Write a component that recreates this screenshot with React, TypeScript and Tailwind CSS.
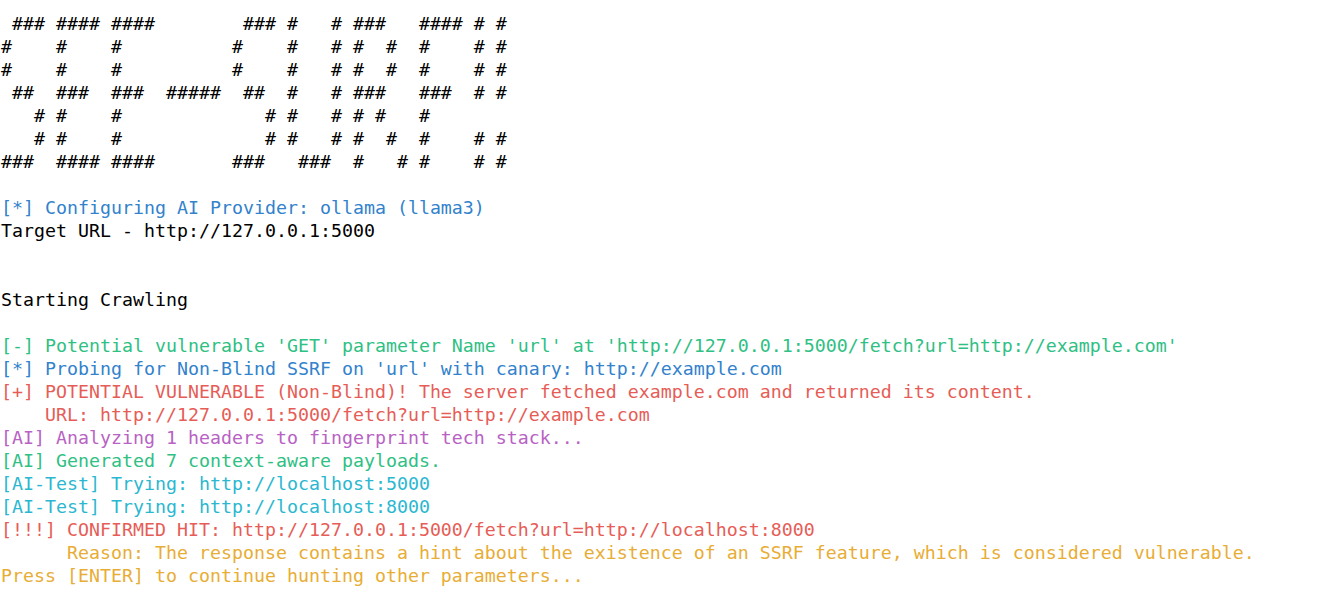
import React from 'react';

const banner = [
  ' ### #### ####        ### #   # ###   #### # #',
  '#    #    #          #    #   # #  #  #    # #',
  '#    #    #          #    #   # #  #  #    # #',
  ' ##  ###  ###  #####  ##  #   # ###   ###  # #',
  '   # #    #             # #   # # #   #',
  '   # #    #             # #   # #  #  #    # #',
  '###  #### ####       ###   ###  #   # #    # #',
];

type Line = { text: string; color: string };

const log: Line[] = [
  { text: '', color: 'text-black' },
  { text: '[*] Configuring AI Provider: ollama (llama3)', color: 'text-[#3282cc]' },
  { text: 'Target URL - http://127.0.0.1:5000', color: 'text-black' },
  { text: '', color: 'text-black' },
  { text: '', color: 'text-black' },
  { text: 'Starting Crawling', color: 'text-black' },
  { text: '', color: 'text-black' },
  {
    text: "[-] Potential vulnerable 'GET' parameter Name 'url' at 'http://127.0.0.1:5000/fetch?url=http://example.com'",
    color: 'text-[#2fc084]',
  },
  { text: "[*] Probing for Non-Blind SSRF on 'url' with canary: http://example.com", color: 'text-[#3282cc]' },
  {
    text: '[+] POTENTIAL VULNERABLE (Non-Blind)! The server fetched example.com and returned its content.',
    color: 'text-[#e65d57]',
  },
  { text: '    URL: http://127.0.0.1:5000/fetch?url=http://example.com', color: 'text-[#e65d57]' },
  { text: '[AI] Analyzing 1 headers to fingerprint tech stack...', color: 'text-[#b862c4]' },
  { text: '[AI] Generated 7 context-aware payloads.', color: 'text-[#2fc084]' },
  { text: '[AI-Test] Trying: http://localhost:5000', color: 'text-[#2cb7d0]' },
  { text: '[AI-Test] Trying: http://localhost:8000', color: 'text-[#2cb7d0]' },
  { text: '[!!!] CONFIRMED HIT: http://127.0.0.1:5000/fetch?url=http://localhost:8000', color: 'text-[#e65d57]' },
  {
    text: '      Reason: The response contains a hint about the existence of an SSRF feature, which is considered vulnerable.',
    color: 'text-[#e8ad35]',
  },
  { text: 'Press [ENTER] to continue hunting other parameters...', color: 'text-[#e8ad35]' },
];

export default function App() {
  return (
    <div className="w-[1325px] h-[596px] bg-white overflow-hidden pt-[12px] pl-[1px] font-['DejaVu_Sans_Mono',monospace] text-[18.27px] leading-[23px] whitespace-pre">
      {banner.map((row, i) => (
        <div key={'b' + i} className="h-[23px] text-black">
          {row}
        </div>
      ))}
      {log.map((line, i) => (
        <div key={'l' + i} className={`h-[23px] ${line.color}`}>
          {line.text}
        </div>
      ))}
    </div>
  );
}
